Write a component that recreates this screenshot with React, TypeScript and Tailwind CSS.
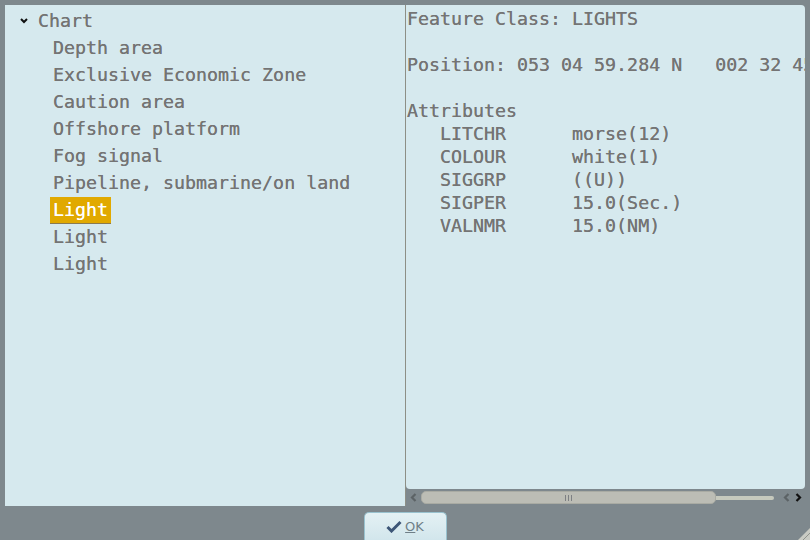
import React from "react";

const mono = { fontFamily: '"DejaVu Sans Mono", "Liberation Mono", monospace' };

const items = [
  "Depth area",
  "Exclusive Economic Zone",
  "Caution area",
  "Offshore platform",
  "Fog signal",
  "Pipeline, submarine/on land",
  "Light",
  "Light",
  "Light",
];

const lines = [
  "Feature Class: LIGHTS",
  "",
  "Position: 053 04 59.284 N   002 32 45.000 W",
  "",
  "Attributes",
  "   LITCHR      morse(12)",
  "   COLOUR      white(1)",
  "   SIGGRP      ((U))",
  "   SIGPER      15.0(Sec.)",
  "   VALNMR      15.0(NM)",
];

const Chevron = ({ dir, color }: { dir: "l" | "r"; color: string }) => (
  <svg width="7" height="9" viewBox="0 0 7 9">
    <path
      d={dir === "l" ? "M5.5 1 L2 4.5 L5.5 8" : "M1.5 1 L5 4.5 L1.5 8"}
      stroke={color}
      strokeWidth="2.2"
      fill="none"
    />
  </svg>
);

export default function App() {
  return (
    <div className="w-[810px] h-[540px] bg-[#7e888d] flex flex-col overflow-hidden" style={mono}>
      <div className="flex px-[5px] pt-[5px] h-[506px]">
        {/* tree */}
        <div className="w-[400px] h-full bg-[#d6e9ee] text-[18.3px] text-[#747474] [text-shadow:0_0_0.4px_#747474]">
          <div className="flex items-center h-[27px] mt-[2px]">
            <svg width="8" height="6" viewBox="0 0 8 6" className="ml-[15px] mr-[10px]">
              <path d="M1 1 L4 4 L7 1" stroke="#111" strokeWidth="2" fill="none" />
            </svg>
            <span>Chart</span>
          </div>
          {items.map((t, i) => (
            <div key={i} className="h-[27px] flex items-center pl-[45px]">
              {i === 6 ? (
                <span className="bg-[#e1a900] text-white [text-shadow:0_0_0.4px_#fff] px-[3px] h-[26px] leading-[26px] shadow-[0_1px_0_#8a7a50]">
                  {t}
                </span>
              ) : (
                <span className="pl-[3px]">{t}</span>
              )}
            </div>
          ))}
        </div>

        {/* details */}
        <div className="w-[400px] h-full flex flex-col border-l border-[#8d8f86]">
          <div className="flex-1 bg-[#d6e9ee] rounded-tr-[4px] rounded-b-[4px] overflow-hidden pt-[2px] pl-[1px]">
            {lines.map((l, i) => (
              <div
                key={i}
                className="h-[23px] leading-[23px] text-[18.3px] text-[#747474] [text-shadow:0_0_0.4px_#747474] whitespace-pre"
              >
                {l}
              </div>
            ))}
          </div>
          <div className="h-[17px] flex items-center">
            <div className="w-[15px] flex justify-center">
              <Chevron dir="l" color="#5c6366" />
            </div>
            <div className="w-[295px] h-[13px] rounded-[5px] bg-[#bcbdb5] border border-[#a9aba3] flex items-center justify-center gap-[2px]">
              <span className="w-px h-[6px] bg-[#7d8083]" />
              <span className="w-px h-[6px] bg-[#7d8083]" />
              <span className="w-px h-[6px] bg-[#7d8083]" />
            </div>
            <div className="w-[58px] h-[4px] bg-[#c6c9bd] rounded-r-[2px]" />
            <div className="flex gap-[5px] ml-[9px]">
              <Chevron dir="l" color="#5c6366" />
              <Chevron dir="r" color="#111" />
            </div>
          </div>
        </div>
      </div>

      <div className="flex-1 relative flex justify-center items-end">
        <button
          className="w-[83px] h-[28px] rounded-t-[5px] border border-b-0 border-[#99c2cf] bg-gradient-to-b from-[#e4f1f4] to-[#d2e6ec] flex items-center justify-center gap-[3px] text-[13px] text-[#6f7f88]"
          style={{ fontFamily: '"DejaVu Sans", sans-serif' }}
        >
          <svg width="16" height="13" viewBox="0 0 16 13">
            <path d="M1.5 7 L5.5 11 L14.5 2" stroke="#3d5677" strokeWidth="3" fill="none" />
          </svg>
          <span>
            <span className="underline">O</span>K
          </span>
        </button>
        <svg width="14" height="14" viewBox="0 0 14 14" className="absolute right-0 bottom-0">
          <path d="M14 2 L2 14 L14 14 Z" fill="#c9cbc4" />
          <path d="M14 7 L7 14" stroke="#8f938c" strokeWidth="1" />
        </svg>
      </div>
    </div>
  );
}
